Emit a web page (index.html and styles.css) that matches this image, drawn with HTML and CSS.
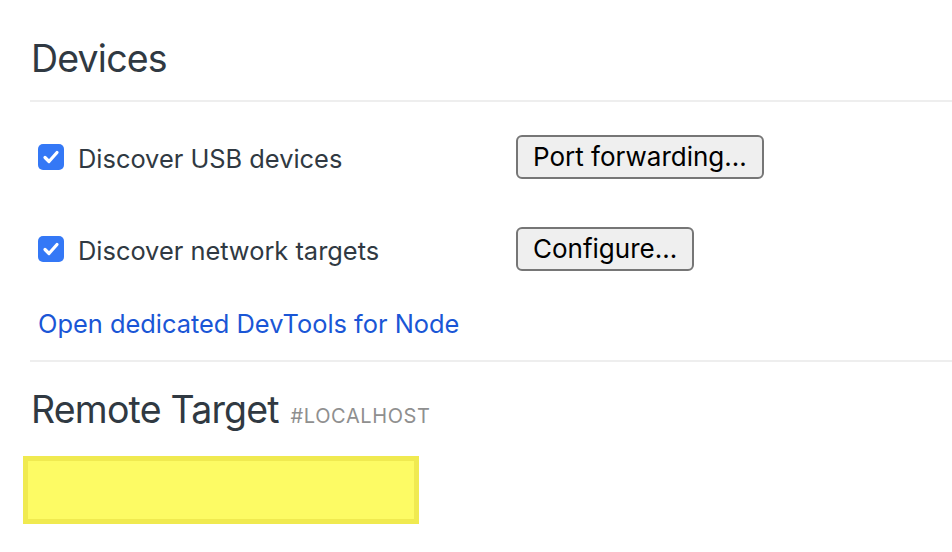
FILE: index.html
```html
<!DOCTYPE html>
<html>
<head>
<meta charset="utf-8">
<link rel="stylesheet" href="styles.css">
</head>
<body>
<div class="page">
  <h1 class="title">Devices</h1>
  <div class="rule"></div>
  <div class="row">
    <label class="opt">
      <span class="box"><svg viewBox="0 0 26 26" width="26" height="26"><path d="M7 13.5 L11 17.5 L19 8.5" fill="none" stroke="#fff" stroke-width="3.2" stroke-linecap="round" stroke-linejoin="round"/></svg></span>
      <span class="opt-text">Discover USB devices</span>
    </label>
    <button class="btn">Port forwarding...</button>
  </div>
  <div class="row">
    <label class="opt">
      <span class="box"><svg viewBox="0 0 26 26" width="26" height="26"><path d="M7 13.5 L11 17.5 L19 8.5" fill="none" stroke="#fff" stroke-width="3.2" stroke-linecap="round" stroke-linejoin="round"/></svg></span>
      <span class="opt-text">Discover network targets</span>
    </label>
    <button class="btn">Configure...</button>
  </div>
  <a class="node-link" href="#">Open dedicated DevTools for Node</a>
  <div class="rule rule-2"></div>
  <h2 class="title title-2">Remote Target <span class="sub">#LOCALHOST</span></h2>
  <div class="highlight"></div>
</div>
</body>
</html>
```
FILE: styles.css
```css
html, body {
  margin: 0;
  padding: 0;
  background: #fff;
}
body {
  font-family: Inter, "Noto Sans", "Liberation Sans", sans-serif;
  color: #303942;
  overflow: hidden;
}
.page {
  padding: 0 0 0 30px;
  display: flex;
  flex-direction: column;
  align-items: flex-start;
}
.title {
  margin: 0;
  font-weight: 400;
  font-size: 37.5px;
  line-height: 46px;
  padding-top: 36px;
  padding-left: 1px;
  letter-spacing: -0.8px;
  color: #303942;
}
.rule {
  align-self: stretch;
  height: 2px;
  background: #eeeeee;
  margin-top: 18px;
}
.row {
  display: flex;
  align-items: center;
  height: 92px;
}
.rule + .row { margin-top: 10px; }
.opt {
  display: flex;
  align-items: center;
  width: 486px;
  padding-left: 8px;
  box-sizing: border-box;
  font-size: 25.4px;
}
.box {
  width: 26px;
  height: 26px;
  border-radius: 5px;
  background: #3478f6;
  display: block;
  margin-right: 14px;
  margin-top: -3px;
}
.box svg { display: block; }
.opt-text { color: #303942; }
.btn {
  font-family: inherit;
  font-size: 26px;
  color: #000;
  background: #efefef;
  border: 2px solid #767676;
  border-radius: 6px;
  height: 44px;
  padding: 0 15px;
  margin: 0;
  margin-top: -3px;
}
.node-link {
  color: #1a56d6;
  text-decoration: none;
  font-size: 25.4px;
  margin-left: 8px;
  margin-top: 12px;
}
.rule-2 { margin-top: 21px; }
.title-2 {
  padding-top: 25px;
}
.sub {
  font-size: 20px;
  color: #8f8f8f;
  letter-spacing: 0.6px;
  margin-left: 2px;
}
.highlight {
  margin-top: 17px;
  margin-left: -7px;
  width: 386px;
  height: 58px;
  background: #fdfb64;
  border: 5px solid #f0ea50;
}
```
